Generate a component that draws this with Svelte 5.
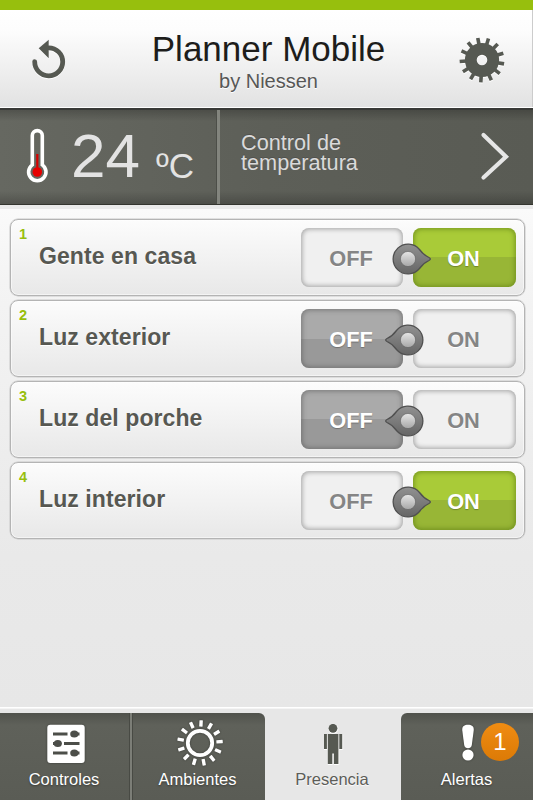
<script>
  let rooms = $state([
    { name: 'Gente en casa', on: true },
    { name: 'Luz exterior', on: false },
    { name: 'Luz del porche', on: false },
    { name: 'Luz interior', on: true }
  ]);
  const spokes = Array.from({ length: 13 }, (_, i) => 3 + ((i + 6.5) * 360) / 13);
</script>

<div class="app">
  <header>
    <svg class="refresh" width="40" height="46" viewBox="0 0 40 46">
      <path d="M6.7 23.6A14 14 0 1 0 20.7 9.8" />
      <path class="head" d="M10.7 10.2 20.7 1.8V20.2Z" />
    </svg>
    <div class="title">
      <h1>Planner Mobile</h1>
      <p>by Niessen</p>
    </div>
    <svg class="gear" width="48" height="48" viewBox="-24 -24 48 48">
      <circle r="11.2" fill="none" stroke="#565952" stroke-width="11.8" />
      {#each spokes as a}
        <rect x="-1.8" y="-22.4" width="3.6" height="7" fill="#565952" transform="rotate({a})" />
      {/each}
    </svg>
  </header>

  <section class="climate">
    <div class="reading">
      <svg width="24" height="58" viewBox="0 0 24 58">
        <path d="M7.3 37.9V8.6a5 5 0 0 1 10 0V37.9a8.7 8.7 0 1 1-10 0Z" fill="none" stroke="#fff" stroke-width="3.6" />
        <path d="M12.3 27V44" stroke="#d80000" stroke-width="2.2" />
        <circle cx="12.3" cy="45" r="4.8" fill="#e60000" />
      </svg>
      <span class="deg">24</span><span class="unit">ºC</span>
    </div>
    <div class="control">
      <div class="lines"><span>Control de</span><span>temperatura</span></div>
      <svg width="30" height="50" viewBox="0 0 30 50">
        <path d="M3.5 4 26 25.7 3.5 46.5" fill="none" stroke="#e6e6e6" stroke-width="4.2" stroke-linecap="round" />
      </svg>
    </div>
  </section>

  <main>
    {#each rooms as room, i}
      <div class="row">
        <span class="num">{i + 1}</span>
        <span class="name">{room.name}</span>
        <div class="switch">
          <button class:off={!room.on} onclick={() => (room.on = false)}>OFF</button>
          <button class:on={room.on} onclick={() => (room.on = true)}>ON</button>
          <svg class="knob" class:left={!room.on} width="46" height="36" viewBox="-18 -18 46 36">
            <defs>
              <linearGradient id="ring{i}" x1="0" y1="0" x2="0" y2="1">
                <stop offset="0" stop-color="#919191" /><stop offset="1" stop-color="#666" />
              </linearGradient>
              <linearGradient id="cap{i}" x1="0" y1="0" x2="0" y2="1">
                <stop offset="0" stop-color="#e6e6e6" /><stop offset="1" stop-color="#a6a6a6" />
              </linearGradient>
            </defs>
            <path d="M11.5-9.5C14-6 17-3.3 21-1.5Q23.7 0 21 1.5C17 3.3 14 6 11.5 9.5A14.9 14.9 0 1 1 11.5-9.5Z" fill="url(#ring{i})" stroke="#505050" stroke-width="1.3" />
            <circle r="7.6" fill="url(#cap{i})" stroke="#5f5f5f" stroke-width=".6" />
          </svg>
        </div>
      </div>
    {/each}
  </main>

  <nav>
    <div class="tab first">
      <svg width="38" height="42" viewBox="0 0 38 42">
        <rect x=".3" y="2.7" width="37.4" height="38.2" rx="3" fill="#fff" />
        <g stroke="#4c4e49" stroke-width="2.8">
          <path d="M6 12H20.5M27 12H32.5M6 21.5H13M17 21.5H32.5M6 31H20.5M27 31H32.5" />
        </g>
        <g fill="#4c4e49">
          <ellipse cx="27.3" cy="12" rx="4.1" ry="3.6" />
          <ellipse cx="10.8" cy="21.5" rx="4.1" ry="3.6" />
          <ellipse cx="27.3" cy="31" rx="4.1" ry="3.6" />
        </g>
      </svg>
      <span>Controles</span>
    </div>
    <div class="tab second">
      <svg width="48" height="48" viewBox="-24 -24 48 48">
        <circle r="12.2" fill="none" stroke="#fff" stroke-width="3.8" />
        {#each spokes as a}
          <rect x="-1.7" y="-22.8" width="3.4" height="6.4" rx=".4" fill="#fff" transform="rotate({a + 180})" />
        {/each}
      </svg>
      <span>Ambientes</span>
    </div>
    <div class="tab active">
      <svg width="22" height="42" viewBox="0 0 22 42">
        <circle cx="11" cy="4.3" r="4.4" />
        <path d="M2 10H4.9V25H2ZM17.3 10H20.2V25H17.3ZM5.8 10H16.4V40H11.9V29.5H10.3V40H5.8Z" />
      </svg>
      <span>Presencia</span>
    </div>
    <div class="tab last">
      <svg width="14" height="38" viewBox="0 0 14 38">
        <path d="M7 .8C11 .8 13.1 2.5 12.7 6.5L10.8 21C10.2 25.4 3.8 25.4 3.2 21L1.3 6.5C.9 2.5 3 .8 7 .8Z" />
        <circle cx="7" cy="31" r="5.6" />
      </svg>
      <span>Alertas</span>
      <b class="badge">1</b>
    </div>
  </nav>
</div>

<style>
  :global(body) { margin: 0; }
  .app {
    width: 533px; height: 800px; box-sizing: border-box; overflow: hidden;
    display: flex; flex-direction: column;
    border-top: 10px solid #97bf0d;
    background: #e7e7e7;
    font-family: "Liberation Sans", Arial, sans-serif;
  }
  header {
    height: 98px; box-sizing: border-box; flex: none;
    display: flex; align-items: flex-start; justify-content: space-between;
    padding: 0 27px 0 28px;
    background: linear-gradient(#fff, #fdfdfd 20%, #e2e2e2);
    border-bottom: 1px solid #fff;
    box-shadow: inset -2px 0 0 -1px #ccc;
  }
  .refresh { margin-top: 28px; overflow: visible; filter: drop-shadow(0 1px 0 #fff); }
  .refresh path { fill: none; stroke: #565952; stroke-width: 4.8; stroke-linecap: round; }
  .refresh .head { fill: #565952; stroke: none; }
  .gear { margin-top: 26px; filter: drop-shadow(0 1px 0 #fff); }
  .title { text-align: center; padding-left: 11px; }
  h1 { margin: 19px 0 0; font: 400 35px/40px "Liberation Sans", Arial, sans-serif; color: #1d1d1b; }
  p { margin: 0; font-size: 20px; line-height: 24px; color: #575756; text-shadow: 0 1px 0 #fff; }
  .climate {
    height: 97px; box-sizing: border-box; flex: none; display: flex;
    border-top: 2px solid #393a37; border-bottom: 1px solid #34352f;
    background: linear-gradient(#0003, #0000 12%, #0000 86%, #0003), linear-gradient(90deg, #666861, #5d5f58 50%, #595b54);
  }
  .reading {
    width: 217px; box-sizing: content-box; display: flex; align-items: flex-start; color: #e3e3e3;
    border-right: 3px solid #83857e;
    box-shadow: inset -1px 0 0 #4c4e48;
  }
  .reading svg { margin: 17px 0 0 25px; flex: none; }
  .deg { font-size: 62px; line-height: 70px; margin: 11px 0 0 22px; width: 85px; }
  .unit { font-size: 35px; line-height: 40px; margin-top: 36px; }
  .control {
    flex: 1; display: flex; justify-content: space-between; align-items: flex-start;
    padding: 23px 23px 0 21px; color: #dadada; font-size: 21.7px; line-height: 20px;
    text-shadow: 0 -1px 0 #4448;
  }
  .lines { display: flex; flex-direction: column; }
  .control svg { margin-top: -2px; }
  main {
    flex: 1; display: flex; flex-direction: column; gap: 4px;
    padding: 14px 8px 0 10px;
    background: linear-gradient(#eaeaea 0 4px, #fafafa 4px, #f4f4f4 15%, #e9e9e9 70%, #e7e7e7);
  }
  .row {
    height: 77px; box-sizing: border-box; display: flex; align-items: flex-start;
    border: 1px solid #b4b4b4; border-radius: 8px;
    background: linear-gradient(#fcfcfc, #e8e8e8);
    box-shadow: 0 0 0 .5px #c8c8c8, inset 0 0 0 1px #fff8;
    padding: 0 8px 0 8px;
  }
  .num { width: 20px; font-size: 14.5px; line-height: 16px; font-weight: 700; color: #97bf0d; margin-top: 6px; }
  .name { flex: 1; font-size: 23px; line-height: 26px; font-weight: 700; color: #575852; margin-top: 23px; letter-spacing: .08px; text-shadow: 0 1px 0 #fff; }
  .switch { position: relative; display: flex; gap: 10px; margin-top: 8px; }
  button {
    width: 102px; height: 59px; border: 0; padding: 3px 2px 0 0; border-radius: 8px;
    font: 700 21.8px "Liberation Sans", Arial, sans-serif; color: #858585;
    background: #f0f0f0; box-shadow: inset 0 0 5px 1px #0005; text-shadow: 0 1px 0 #fff;
  }
  .switch button:last-of-type { width: 103px; }
  .switch button.on, .switch button.off { color: #fff; text-shadow: 0 1px 1px #0004; }
  .switch button.on { background: linear-gradient(#a9cb38 50%, #98b636 50%); box-shadow: inset 0 0 5px 1px #5a7a10aa; }
  .switch button.off { background: linear-gradient(#aaa 50%, #999 50%); box-shadow: inset 0 0 5px 1px #5559; }
  .knob { position: absolute; left: 89px; top: 13px; }
  .knob.left { transform: scaleX(-1); left: 79px; }
  nav {
    height: 93px; flex: none; box-sizing: border-box; display: flex; padding-top: 5px;
    background: #e7e7e7; border-top: 1px solid #fff; box-shadow: inset 0 1px 0 #fff9;
  }
  .tab {
    box-sizing: border-box; position: relative; display: flex; flex-direction: column; align-items: center;
    color: #fff; fill: #fff; font-size: 16.5px; line-height: 20px;
    background: linear-gradient(#50524c, #5f615a 14%, #5a5c55);
    text-shadow: 0 1px 2px #0006;
  }
  .tab svg { flex: none; filter: drop-shadow(0 0 1px #0006); }
  .tab span { position: relative; margin-top: auto; margin-bottom: 11px; }
  .first { width: 132px; border-right: 2px solid #7c7e77; padding: 9px 2px 0 0; box-shadow: inset -1px 0 #484a44; }
  .first svg { margin-left: 4px; }
  .second { width: 133px; padding: 6px 3px 0 0; border-top-right-radius: 6px; border-left: 1px solid #484a44; }
  .second svg { margin-left: 5px; }
  .active { width: 136px; background: none; color: #5c5d58; fill: #565952; padding: 11px 2px 0 0; text-shadow: 0 1px 1px #fff; }
  .active svg { margin-left: 2px; filter: drop-shadow(0 1px 0 #fff) drop-shadow(1px 0 0 #fff8); }
  .last { width: 132px; border-top-left-radius: 6px; padding: 11px 1px 0 0; }
  .last svg { margin-left: 3px; }
  .badge {
    position: absolute; left: 80px; top: 10px; width: 38px; height: 38px; border-radius: 50%;
    background: linear-gradient(#f08c12, #dc7a06); color: #fff; font-weight: 400; font-size: 24px;
    line-height: 38px; text-align: center; text-shadow: none;
  }
</style>
